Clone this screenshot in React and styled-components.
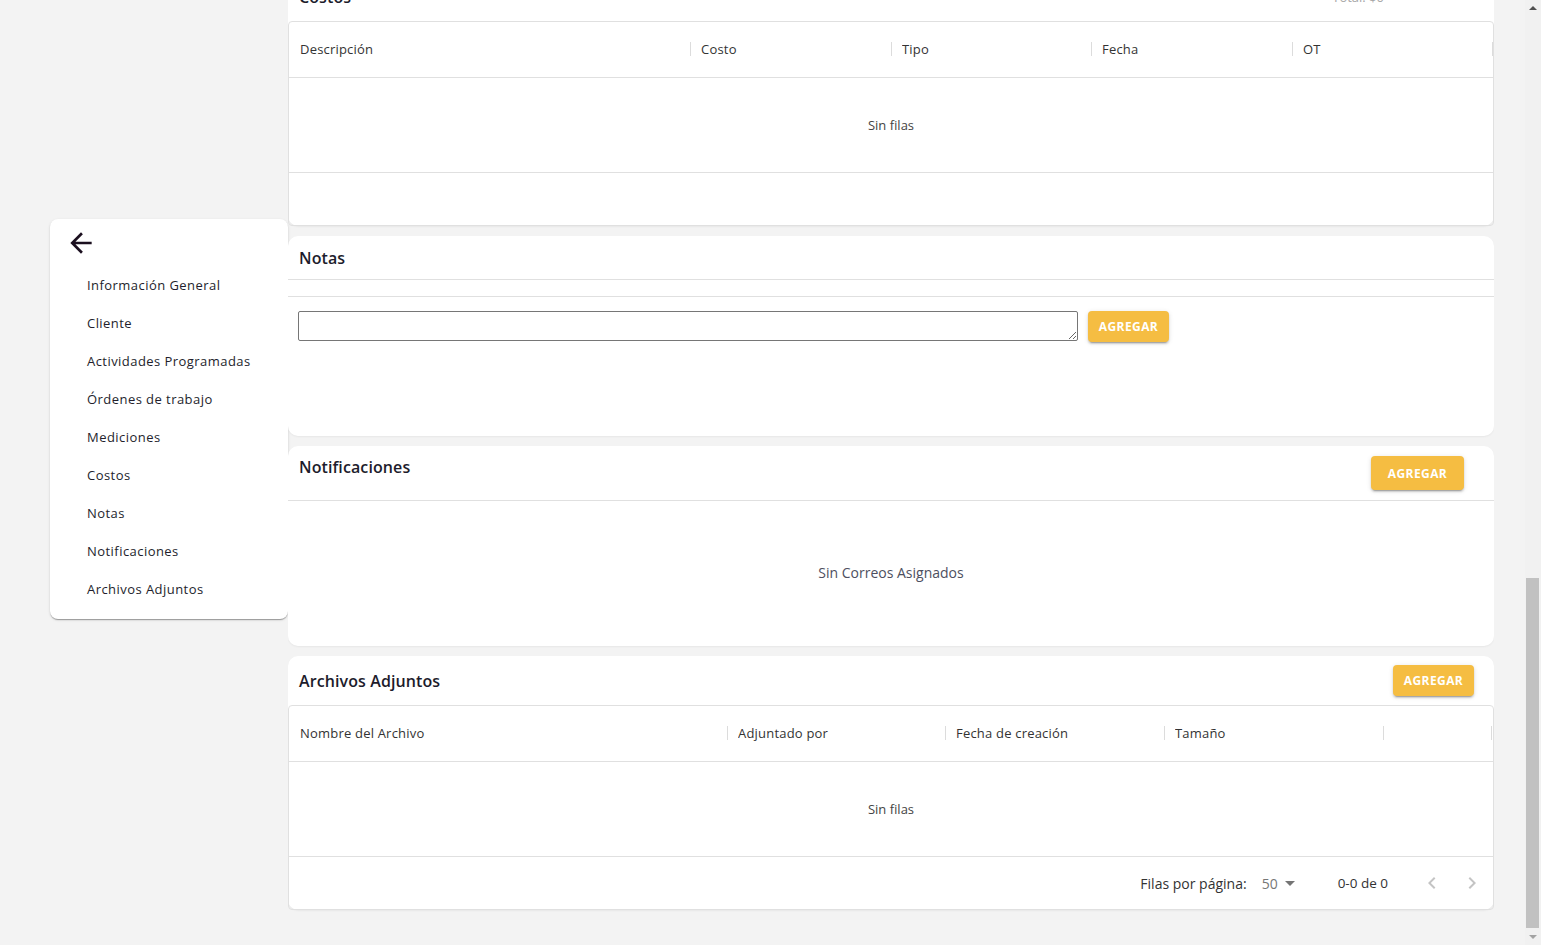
import React from 'react';
import styled, { createGlobalStyle } from 'styled-components';

const GlobalStyle = createGlobalStyle`
  html, body { height: 100%; }
  body {
    margin: 0;
    overflow: hidden;
    background: #f3f3f3;
    font-family: "Open Sans", "Liberation Sans", sans-serif;
    color: #222;
  }
  * { box-sizing: border-box; }
`;

const Page = styled.div`
  display: flex;
  height: 100vh;
  overflow: hidden;
`;

const SideColumn = styled.aside`
  flex: none;
  width: 288px;
  padding: 219px 0 0 50px;
`;

const SideNav = styled.nav`
  background: #fff;
  border-radius: 8px;
  box-shadow: 0 2px 1px -1px rgba(0, 0, 0, 0.2), 0 1px 1px 0 rgba(0, 0, 0, 0.14),
    0 1px 3px 0 rgba(0, 0, 0, 0.12);
  padding: 8px 0 11px;
`;

const BackButton = styled.button`
  display: block;
  width: 32px;
  height: 32px;
  margin: 0 0 7px 15px;
  padding: 0;
  border: 0;
  background: transparent;
  cursor: pointer;
  svg { display: block; }
`;

const MenuItem = styled.a`
  display: flex;
  align-items: center;
  height: 38px;
  padding-left: 37px;
  font-size: 13px;
  font-weight: 500;
  letter-spacing: 0.45px;
  color: #231e2c;
  text-decoration: none;
  cursor: pointer;
`;

const Main = styled.main`
  flex: none;
  width: 1206px;
  height: 100%;
  display: flex;
  flex-direction: column;
  justify-content: flex-end;
  gap: 10px;
  padding-bottom: 35px;
  overflow: hidden;
`;

const Card = styled.section`
  flex: none;
  background: #fff;
  border-radius: 10px;
  box-shadow: 0 1px 2px rgba(0, 0, 0, 0.05);
  height: ${(p) => (p.$height ? `${p.$height}px` : 'auto')};
  display: flex;
  flex-direction: column;
`;

const CardHeader = styled.header`
  display: flex;
  align-items: ${(p) => (p.$top ? 'flex-start' : 'center')};
  justify-content: space-between;
  flex: none;
  height: ${(p) => p.$height}px;
  padding: ${(p) => (p.$top ? 10 : 0)}px ${(p) => p.$right ?? 10}px 0 11px;
  border-bottom: ${(p) => (p.$divider ? '1px solid #e0e0e0' : '0')};
`;

const CardTitle = styled.h2`
  margin: 0;
  font-size: 16px;
  line-height: 22px;
  font-weight: 600;
  letter-spacing: 0.1px;
  color: #1d1c2c;
`;

const HeaderNote = styled.span`
  font-size: 13px;
  color: #a8a8a8;
`;

const AddButton = styled.button`
  flex: none;
  width: ${(p) => (p.$large ? 93 : 81)}px;
  height: ${(p) => (p.$large ? 34 : 31)}px;
  border: 0;
  border-radius: 4px;
  background: #f5bd42;
  color: #fff;
  font-family: "Open Sans", "Liberation Sans", sans-serif;
  font-size: 12px;
  font-weight: 700;
  letter-spacing: 0.4px;
  text-transform: uppercase;
  cursor: pointer;
  box-shadow: 0 3px 1px -2px rgba(0, 0, 0, 0.2), 0 2px 2px 0 rgba(0, 0, 0, 0.14),
    0 1px 5px 0 rgba(0, 0, 0, 0.12);
`;

/* ---------- Data table ---------- */

const Table = styled.div`
  border: 1px solid #e0e0e0;
  border-radius: 4px;
  display: flex;
  flex-direction: column;
  flex: none;
`;

const HeaderRow = styled.div`
  display: flex;
  height: 56px;
  border-bottom: 1px solid #e0e0e0;
`;

const HeaderCell = styled.div`
  display: flex;
  align-items: center;
  flex: none;
  width: ${(p) => p.$w}px;
  padding-left: ${(p) => (p.$first ? 11 : 10)}px;
  padding-bottom: 1px;
  font-size: 13px;
  font-weight: 500;
  letter-spacing: 0.2px;
  color: #333;
`;

const HeaderLabel = styled.span`
  flex: 1;
  white-space: nowrap;
  overflow: hidden;
`;

const Separator = styled.span`
  flex: none;
  width: 1px;
  height: 14px;
  background: #dcdcdc;
  margin-left: auto;
`;

const EmptyBody = styled.div`
  display: flex;
  align-items: center;
  justify-content: center;
  height: 95px;
  padding-bottom: 1px;
  border-bottom: 1px solid #e0e0e0;
  font-size: 13px;
  color: #444;
`;

const Footer = styled.div`
  display: flex;
  align-items: center;
  justify-content: flex-end;
  height: 52px;
  padding-right: 1px;
  font-size: 14px;
  color: #333;
`;

const RowsLabel = styled.span`
  margin-right: 15px;
`;

const RowsSelect = styled.span`
  display: flex;
  align-items: center;
  color: #777;
  margin-right: 36px;
`;

const RangeText = styled.span`
  margin-right: 24px;
  font-size: 13.5px;
`;

const PageButton = styled.button`
  width: 40px;
  height: 40px;
  border: 0;
  padding: 0;
  background: transparent;
  display: flex;
  align-items: center;
  justify-content: center;
`;

/* ---------- Notas ---------- */

const EmptyList = styled.div`
  height: 17px;
  border-bottom: 1px solid #e0e0e0;
`;

const NoteForm = styled.div`
  display: flex;
  align-items: flex-start;
  gap: 10px;
  padding: 14px 10px;
`;

const NoteInput = styled.textarea`
  width: 780px;
  height: 30px;
  border: 1px solid #767676;
  border-radius: 2px;
  font-family: "Open Sans", "Liberation Sans", sans-serif;
  font-size: 13px;
  padding: 4px 6px;
`;

const EmptyMessage = styled.div`
  flex: 1;
  display: flex;
  align-items: center;
  justify-content: center;
  font-size: 14px;
  color: #4d4f60;
  padding-bottom: 2px;
`;

/* ---------- Scrollbar drawing ---------- */

const ScrollBar = styled.div`
  flex: none;
  width: 16px;
  height: 100%;
  margin-left: auto;
  background: #f1f1f1;
  display: flex;
  flex-direction: column;
`;

const ScrollArrow = styled.div`
  flex: none;
  height: 16px;
  display: flex;
  align-items: center;
  justify-content: center;
  &::before {
    content: '';
    width: 0;
    height: 0;
    border-left: 4px solid transparent;
    border-right: 4px solid transparent;
    ${(p) =>
      p.$down
        ? 'border-top: 4px solid #a3a3a3;'
        : 'border-bottom: 4px solid #505050;'}
  }
`;

const ScrollTrack = styled.div`
  flex: 1;
  display: flex;
  flex-direction: column;
  justify-content: flex-end;
  padding: 0 2px 1px 1px;
`;

const ScrollThumb = styled.div`
  height: 350px;
  background: #c1c1c1;
`;

const ArrowBack = () => (
  <svg width="32" height="32" viewBox="0 0 24 24" aria-hidden="true">
    <path fill="#1b0f1f" d="M20 11H7.83l5.59-5.59L12 4l-8 8 8 8 1.41-1.41L7.83 13H20v-2z" />
  </svg>
);

const Caret = () => (
  <svg width="24" height="24" viewBox="0 0 24 24" aria-hidden="true">
    <path fill="#757575" d="M7 10l5 5 5-5z" />
  </svg>
);

const ChevronLeft = () => (
  <svg width="24" height="24" viewBox="0 0 24 24" aria-hidden="true">
    <path fill="#c4c4c4" d="M15.41 7.41 14 6l-6 6 6 6 1.41-1.41L10.83 12z" />
  </svg>
);

const ChevronRight = () => (
  <svg width="24" height="24" viewBox="0 0 24 24" aria-hidden="true">
    <path fill="#c4c4c4" d="M10 6 8.59 7.41 13.17 12l-4.58 4.59L10 18l6-6z" />
  </svg>
);

function DataTable({ columns, pagination }) {
  return (
    <Table>
      <HeaderRow>
        {columns.map((c, i) => (
          <HeaderCell key={i} $w={c.w} $first={i === 0}>
            <HeaderLabel>{c.label}</HeaderLabel>
            <Separator />
          </HeaderCell>
        ))}
      </HeaderRow>
      <EmptyBody>Sin filas</EmptyBody>
      <Footer>
        {pagination && (
          <>
            <RowsLabel>Filas por página:</RowsLabel>
            <RowsSelect>
              50
              <Caret />
            </RowsSelect>
            <RangeText>0-0 de 0</RangeText>
            <PageButton aria-label="anterior">
              <ChevronLeft />
            </PageButton>
            <PageButton aria-label="siguiente">
              <ChevronRight />
            </PageButton>
          </>
        )}
      </Footer>
    </Table>
  );
}

const menu = [
  'Información General',
  'Cliente',
  'Actividades Programadas',
  'Órdenes de trabajo',
  'Mediciones',
  'Costos',
  'Notas',
  'Notificaciones',
  'Archivos Adjuntos',
];

const costCols = [
  { label: 'Descripción', w: 402 },
  { label: 'Costo', w: 201 },
  { label: 'Tipo', w: 200 },
  { label: 'Fecha', w: 201 },
  { label: 'OT', w: 200 },
];

const fileCols = [
  { label: 'Nombre del Archivo', w: 439 },
  { label: 'Adjuntado por', w: 218 },
  { label: 'Fecha de creación', w: 219 },
  { label: 'Tamaño', w: 219 },
  { label: '', w: 108 },
];

export default function App() {
  return (
    <>
      <GlobalStyle />
      <Page>
        <SideColumn>
          <SideNav>
            <BackButton aria-label="Volver">
              <ArrowBack />
            </BackButton>
            {menu.map((m) => (
              <MenuItem key={m}>{m}</MenuItem>
            ))}
          </SideNav>
        </SideColumn>

        <Main>
          <Card>
            <CardHeader $height={49} $right={110}>
              <CardTitle>Costos</CardTitle>
              <HeaderNote>Total: $0</HeaderNote>
            </CardHeader>
            <DataTable columns={costCols} />
          </Card>

          <Card $height={200}>
            <CardHeader $height={44} $divider>
              <CardTitle>Notas</CardTitle>
            </CardHeader>
            <EmptyList />
            <NoteForm>
              <NoteInput aria-label="Nota" />
              <AddButton>Agregar</AddButton>
            </NoteForm>
          </Card>

          <Card $height={200}>
            <CardHeader $height={55} $divider $right={30} $top>
              <CardTitle>Notificaciones</CardTitle>
              <AddButton $large>Agregar</AddButton>
            </CardHeader>
            <EmptyMessage>Sin Correos Asignados</EmptyMessage>
          </Card>

          <Card>
            <CardHeader $height={49} $right={20}>
              <CardTitle>Archivos Adjuntos</CardTitle>
              <AddButton>Agregar</AddButton>
            </CardHeader>
            <DataTable columns={fileCols} pagination />
          </Card>
        </Main>

        <ScrollBar aria-hidden="true">
          <ScrollArrow />
          <ScrollTrack>
            <ScrollThumb />
          </ScrollTrack>
          <ScrollArrow $down />
        </ScrollBar>
      </Page>
    </>
  );
}
